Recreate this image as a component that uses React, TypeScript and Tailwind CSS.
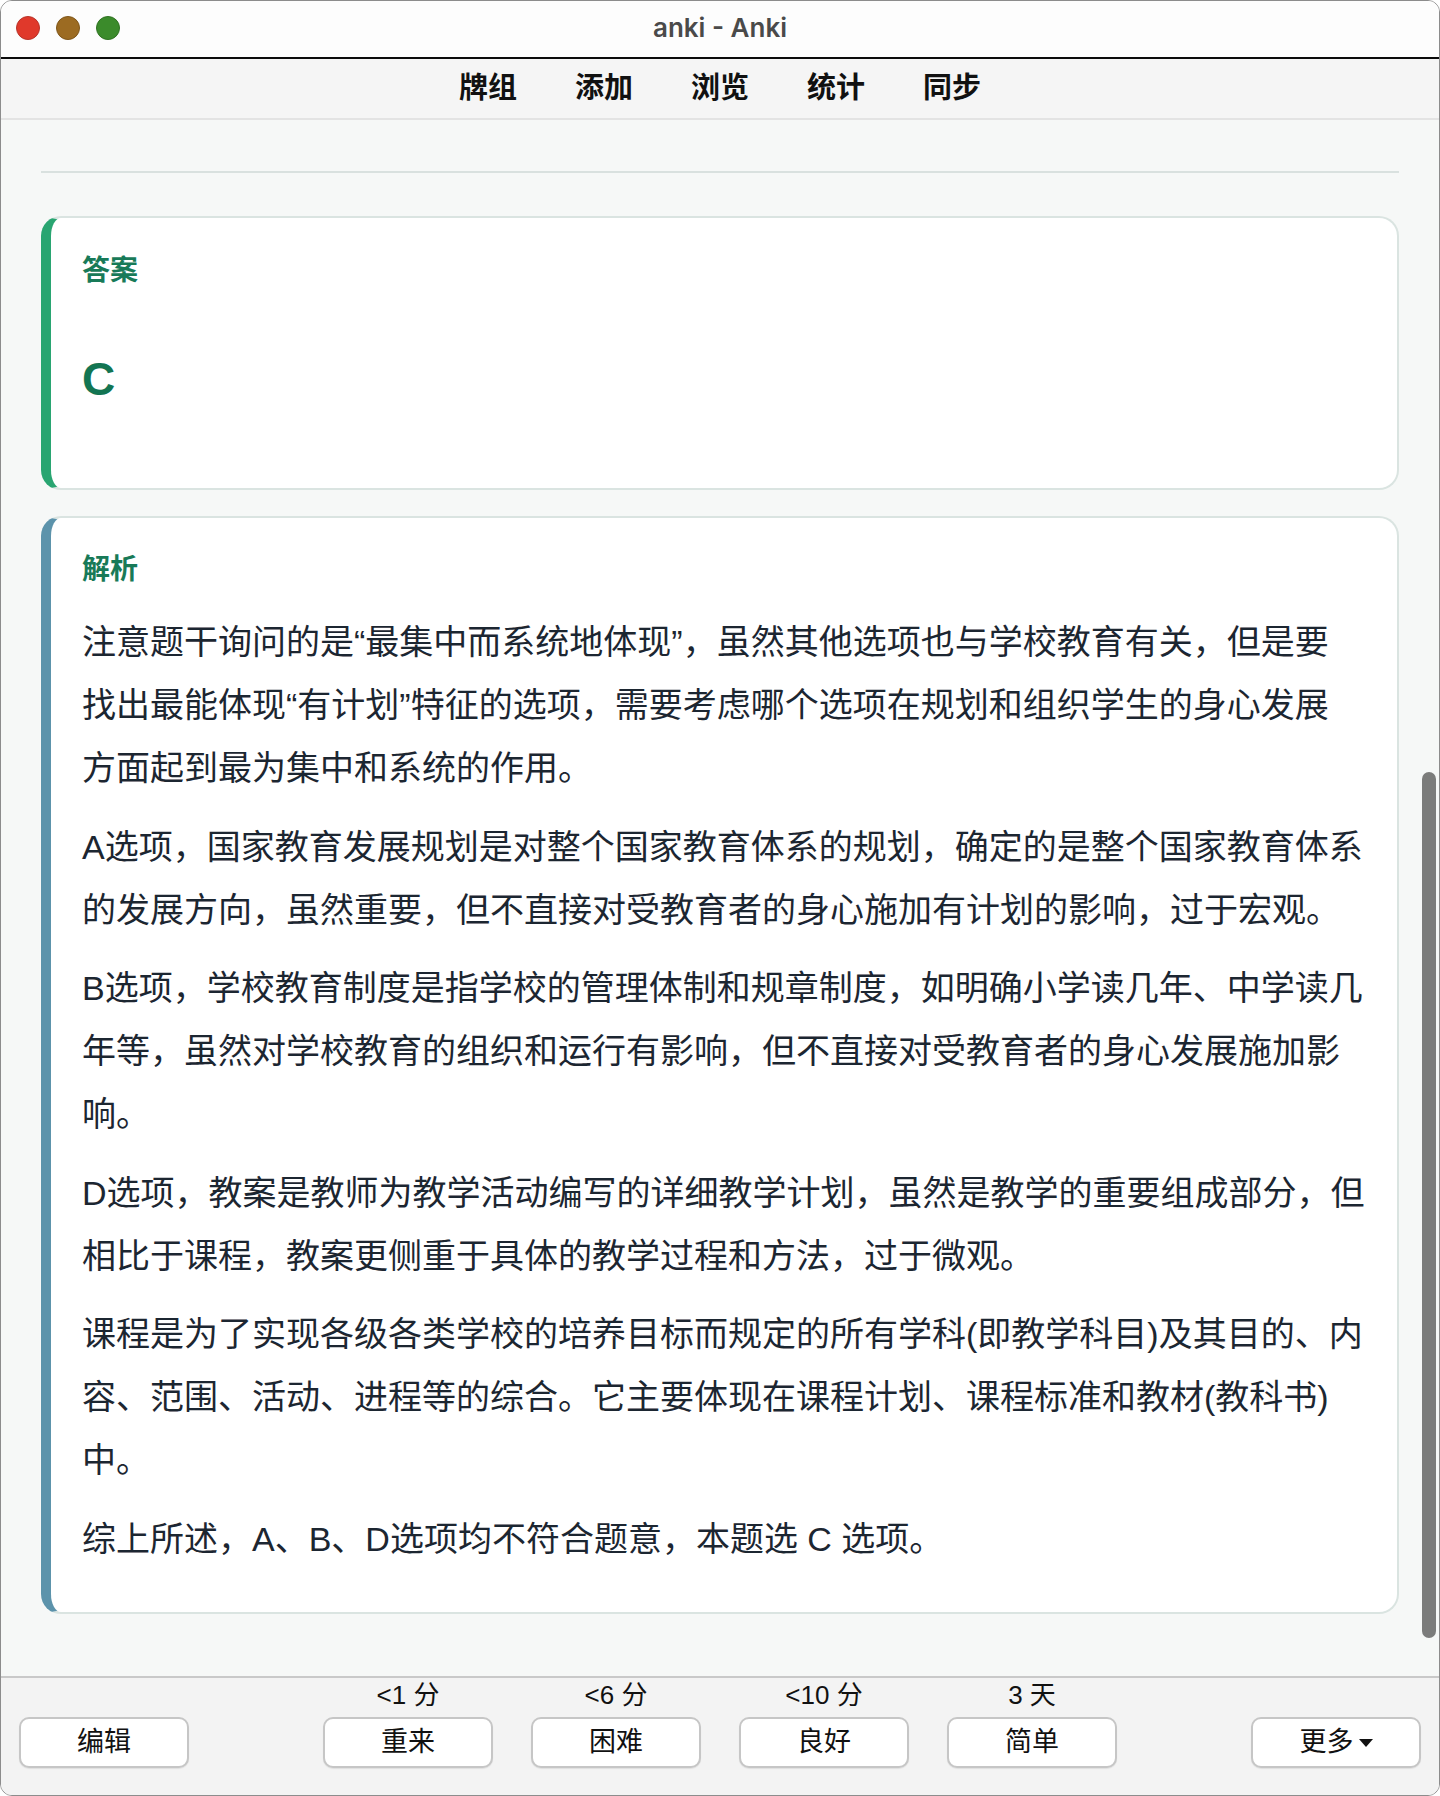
import React from "react";

const body = { fontFamily: '"Liberation Sans", "Noto Sans CJK SC", sans-serif' };

const paragraphs: string[][] = [
  [
    "注意题干询问的是“最集中而系统地体现”，虽然其他选项也与学校教育有关，但是要",
    "找出最能体现“有计划”特征的选项，需要考虑哪个选项在规划和组织学生的身心发展",
    "方面起到最为集中和系统的作用。",
  ],
  [
    "A选项，国家教育发展规划是对整个国家教育体系的规划，确定的是整个国家教育体系",
    "的发展方向，虽然重要，但不直接对受教育者的身心施加有计划的影响，过于宏观。",
  ],
  [
    "B选项，学校教育制度是指学校的管理体制和规章制度，如明确小学读几年、中学读几",
    "年等，虽然对学校教育的组织和运行有影响，但不直接对受教育者的身心发展施加影",
    "响。",
  ],
  [
    "D选项，教案是教师为教学活动编写的详细教学计划，虽然是教学的重要组成部分，但",
    "相比于课程，教案更侧重于具体的教学过程和方法，过于微观。",
  ],
  [
    "课程是为了实现各级各类学校的培养目标而规定的所有学科(即教学科目)及其目的、内",
    "容、范围、活动、进程等的综合。它主要体现在课程计划、课程标准和教材(教科书)",
    "中。",
  ],
  ["综上所述，A、B、D选项均不符合题意，本题选 C 选项。"],
];

function Btn({ children }: { children: React.ReactNode }) {
  return (
    <div className="w-[170px] h-[51px] rounded-[10px] border-2 border-[#c6c6c6] bg-white shadow-[0_1px_1px_rgba(0,0,0,0.08)] flex items-center justify-center text-[27px] text-[#111]">
      {children}
    </div>
  );
}

export default function App() {
  const answers = [
    { t: "<1 分", b: "重来" },
    { t: "<6 分", b: "困难" },
    { t: "<10 分", b: "良好" },
    { t: "3 天", b: "简单" },
  ];
  return (
    <div className="w-[1440px] h-[1796px] bg-white" style={body}>
      <div className="w-full h-full rounded-[12px] border border-[#8c8c8c] overflow-hidden flex flex-col">
        {/* Title bar */}
        <div className="relative h-[56px] shrink-0 bg-[#fdfdfd] flex items-center justify-center pb-[4px]">
          <div className="absolute left-[15px] top-[15px] flex gap-[16px]">
            <div className="w-[24px] h-[24px] rounded-full bg-[#e0392b] border border-[#b8342a]" />
            <div className="w-[24px] h-[24px] rounded-full bg-[#9c6b22] border border-[#7f561a]" />
            <div className="w-[24px] h-[24px] rounded-full bg-[#3b8b2b] border border-[#2f7222]" />
          </div>
          <span
            className="text-[26px] font-semibold text-[#4a4a4a]"
            style={{ fontFamily: 'Inter, "Liberation Sans", sans-serif' }}
          >
            anki - Anki
          </span>
        </div>
        <div className="h-[2px] shrink-0 bg-[#0b0b0b]" />
        {/* Menu bar */}
        <div className="h-[61px] shrink-0 bg-[#f5f5f5] border-b-2 border-[#e3e3e3] flex items-center justify-center gap-[58px] text-[29px] font-bold text-[#111]">
          <span>牌组</span>
          <span>添加</span>
          <span>浏览</span>
          <span>统计</span>
          <span>同步</span>
        </div>
        {/* Content */}
        <div className="relative flex-1 bg-[#f6f8f7] overflow-hidden px-[40px]">
          <div className="mt-[51px] h-[2px] bg-[#d9e1df]" />
          {/* Answer card */}
          <div className="mt-[43px] bg-white rounded-[20px] border-2 border-[#dae4e1] border-l-[10px] border-l-[#29a571] px-[31px] pt-[32px] pb-[74px]">
            <div className="text-[28px] leading-[42px] font-bold text-[#187a58]">答案</div>
            <div className="mt-[53px] text-[46px] leading-[69px] font-bold text-[#137552]">C</div>
          </div>
          {/* Analysis card */}
          <div className="mt-[26px] bg-white rounded-[20px] border-2 border-[#dae4e1] border-l-[10px] border-l-[#5c93ab] px-[31px] pt-[31px] pb-[41px]">
            <div className="text-[28px] leading-[42px] font-bold text-[#187a58]">解析</div>
            <div className="mt-[20px] text-[34px] leading-[63px] text-[#1c2631]">
              {paragraphs.map((p, i) => (
                <p key={i} className={`whitespace-nowrap ${i > 0 ? "mt-[15.5px]" : ""}`}>
                  {p.map((line, j) => (
                    <React.Fragment key={j}>
                      {line}
                      {j < p.length - 1 && <br />}
                    </React.Fragment>
                  ))}
                </p>
              ))}
            </div>
          </div>
          {/* Scrollbar */}
          <div className="absolute right-[3px] top-[652px] w-[14px] h-[866px] rounded-full bg-[#7b7c7b]" />
        </div>
        {/* Bottom bar */}
        <div className="h-[119px] shrink-0 bg-[#f3f3f3] border-t-2 border-[#c9c9c9] flex items-end justify-between px-[18px] pb-[27px]">
          <Btn>编辑</Btn>
          <div className="flex gap-[38px]">
            {answers.map((a) => (
              <div key={a.b} className="flex flex-col items-center">
                <div className="text-[26px] leading-[28px] text-[#111] mb-[8px]">{a.t}</div>
                <Btn>{a.b}</Btn>
              </div>
            ))}
          </div>
          <Btn>
            <span>更多</span>
            <svg width="14" height="9" viewBox="0 0 14 9" className="ml-[5px] mt-[2px]">
              <path d="M0 0 L14 0 L7 8 Z" fill="#111" />
            </svg>
          </Btn>
        </div>
      </div>
    </div>
  );
}
